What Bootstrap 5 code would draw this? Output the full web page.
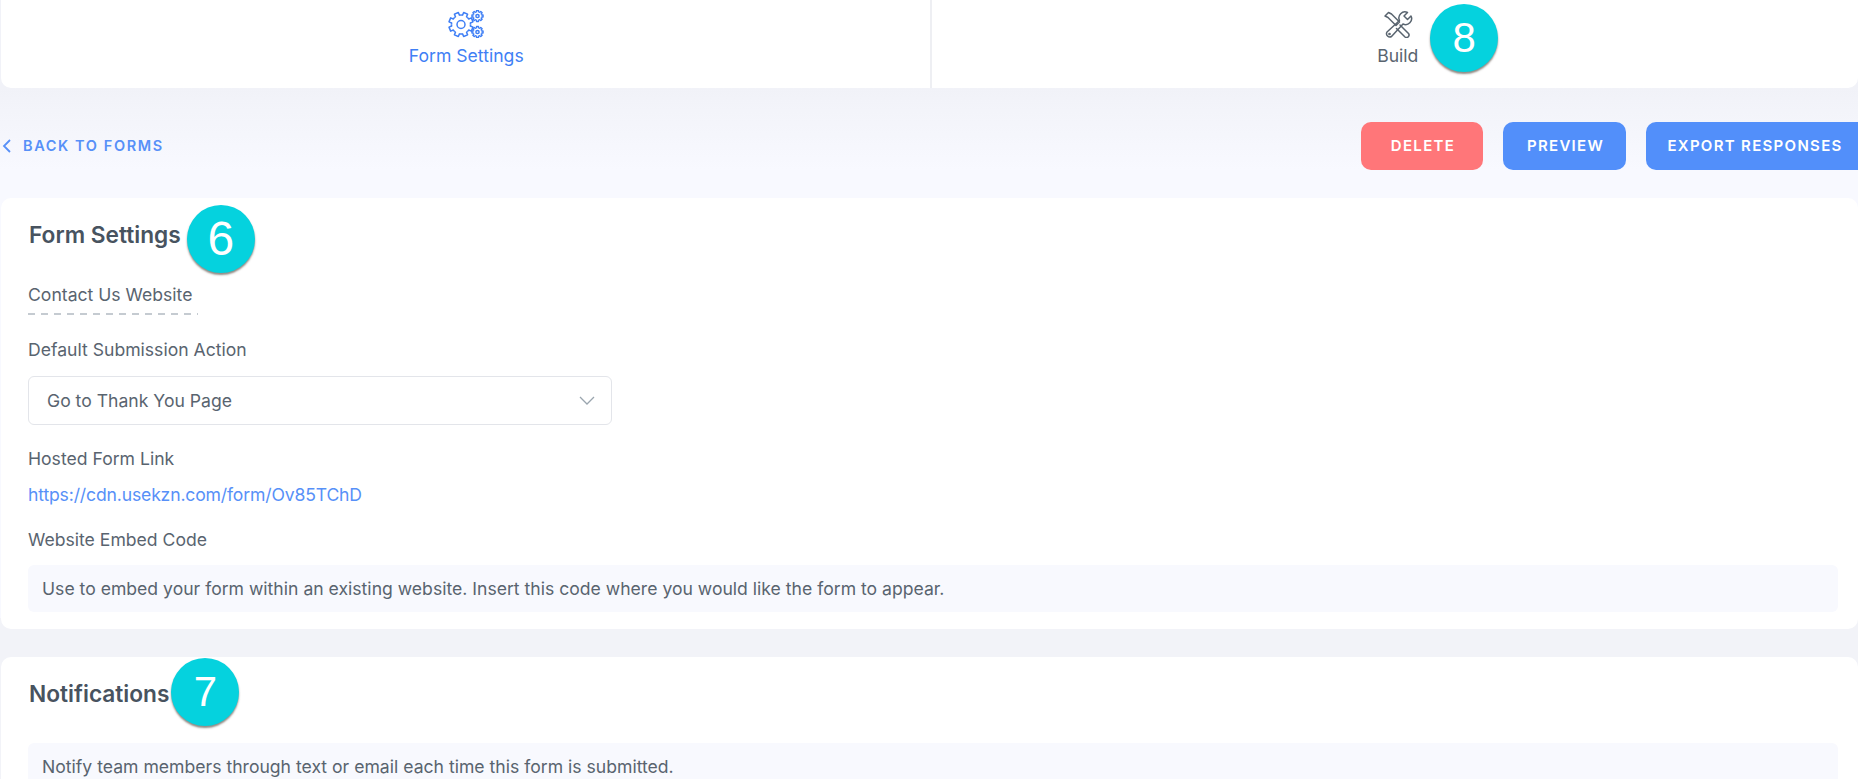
<!DOCTYPE html>
<html lang="en"><head><meta charset="utf-8"><title>Form Settings</title>
<link href="https://cdn.jsdelivr.net/npm/bootstrap@5.3.0/dist/css/bootstrap.min.css" rel="stylesheet">
<style>
html,body{height:779px;overflow:hidden}
body{font-family:Inter,"Liberation Sans",sans-serif;color:#59646f;background:#f8f9ff;font-size:17.6px;line-height:24px}
.page-bg{height:779px;overflow:hidden;background:linear-gradient(#f1f2f8 88px,#f8f9ff 170px)}
.top-tabs{height:88px;background:#fff;border-radius:0 0 10px 10px;margin-left:1px}
.top-tab{height:88px;padding-top:10px}
.top-tab:first-child{padding-left:2px}
.top-tab+.top-tab{border-left:2px solid #eeeff3;padding-left:6px}
.tab-on{color:#3f7ff5}
.tab-label{line-height:24px;margin-top:6px}
.action-bar{height:110px;padding-top:34px}
.back-link{color:#5790f8;font-size:14.5px;font-weight:600;letter-spacing:1.6px;text-decoration:none;height:48px;margin-left:2px}
.act-btn{height:48px;border:0;border-radius:10px;color:#fff;font-size:15px;font-weight:600;letter-spacing:1.3px;line-height:48px;padding:0 0 0 2px}
.act-del{width:122px;background:#ff7679}.act-del:hover{background:#ff7679;color:#fff}
.act-prev{width:123px;background:#528ffa}.act-prev:hover{background:#528ffa;color:#fff}
.act-exp{width:212px;background:#528ffa;border-radius:10px 0 0 10px;padding-left:6px}.act-exp:hover{background:#528ffa;color:#fff}
.act-row{gap:20px}
.panel-stack{background:linear-gradient(transparent 420px,#f2f3f8 420px)}
.panel{background:#fff;border-radius:10px;margin-left:1px;padding:0 20px 0 27px}
.panel-a{height:431px;margin-bottom:28px;padding-top:21px}
.panel-b{height:200px;padding-top:21px}
.panel-title{font-size:22.7px;font-weight:600;line-height:32px;color:#48535f;position:relative;display:inline-block;margin-left:1px}
.num-dot{position:absolute;width:68px;height:68px;border-radius:50%;background:#05d2de;color:#fff;font-family:"Liberation Sans",sans-serif;font-size:42px;font-weight:400;line-height:68px;text-align:center;box-shadow:0 2px 2px rgba(70,60,50,.6)}
.num-big{font-size:48px}
.dot-8{left:53px;top:-40px}
.dot-6{left:100%;margin-left:6px;top:-14px}
.dot-7{left:100%;margin-left:2px;top:-20px}
.title-name{display:block;width:fit-content;line-height:24px;padding:0 6px 8px 0;margin-top:32px;background:repeating-linear-gradient(90deg,#c5cbd1 0 7px,transparent 7px 13px) bottom left/100% 2px no-repeat}
.field-label{line-height:24px;margin:0}
.lab-1{margin-top:23px}
.lab-2{margin-top:22px}
.lab-3{margin-top:21px}
.select-box{width:584px;height:49px;border:1px solid #e3e5ea;border-radius:6px;padding:0 16px 0 18px;background:#fff;margin-top:14px}
.url-link{color:#5790f8;text-decoration:none;margin-top:12px;letter-spacing:-.16px}
.hint-box{background:#f8f9fe;border-radius:6px;height:47px;line-height:47px;padding:0 14px}
.hint-1{margin-top:13px}
.hint-2{margin-top:33px}
</style></head><body>
<div class="page-bg">
<div class="top-tabs d-flex">
 <div class="top-tab flex-fill text-center tab-on w-50">
  <svg width="36" height="28" viewBox="0 0 36 28" fill="none" stroke="#3f7ff5" stroke-width="1.5" stroke-linejoin="round" class="d-block mx-auto">
   <defs><g id="tooth"><path d="M-3.64-8.78L-2.14-9.26V-12.1H2.14V-9.26L3.64-8.78"/></g>
   <g id="gear"><use href="#tooth"/><use href="#tooth" transform="rotate(45)"/><use href="#tooth" transform="rotate(90)"/><use href="#tooth" transform="rotate(135)"/><use href="#tooth" transform="rotate(180)"/><use href="#tooth" transform="rotate(225)"/><use href="#tooth" transform="rotate(270)"/><use href="#tooth" transform="rotate(315)"/></g></defs>
   <use href="#gear" transform="translate(13 14.500) rotate(22.500)"/><circle cx="13" cy="14.500" r="4"/>
   <use href="#gear" transform="translate(29.500 6) scale(.46)" stroke-width="3"/><circle cx="29.500" cy="6" r="1.600"/>
   <use href="#gear" transform="translate(29.500 22) scale(.46)" stroke-width="3"/><circle cx="29.500" cy="22" r="1.600"/>
  </svg>
  <div class="tab-label">Form Settings</div>
 </div>
 <div class="top-tab flex-fill text-center w-50">
  <svg width="30" height="28" viewBox="0 0 30 28" fill="none" stroke="#59646f" stroke-width="1.500" stroke-linejoin="round" stroke-linecap="round" class="d-block mx-auto"><path d="M2 6l3.500-3.500 3 1.500 8 8-3.500 3.500-8-8z"/><path d="M17 15l8.500 8.500a2.500 2.500 0 0 1-3.500 3.500l-8.500-8.500"/><path d="M28 6l-3.500 3.500-3.500-3.500L24.500 2.500a6 6 0 0 0-8 8L4 22a3.300 3.300 0 0 0 4.500 4.500L20 14a6 6 0 0 0 8-8z"/><circle cx="6.500" cy="24" r=".6"/></svg>
  <div class="tab-label position-relative d-inline-block">Build<span class="num-dot dot-8">8</span></div>
 </div>
</div>
<div class="action-bar d-flex justify-content-between">
 <a href="#" class="back-link d-flex align-items-center gap-2">
  <svg width="9" height="14" viewBox="0 0 9 14" fill="none" stroke="#5790f8" stroke-width="1.800"><path d="M8 1L2 7l6 6"/></svg><span class="ms-1">BACK TO FORMS</span></a>
 <div class="d-flex act-row">
  <button class="btn act-btn act-del">DELETE</button>
  <button class="btn act-btn act-prev">PREVIEW</button>
  <button class="btn act-btn act-exp">EXPORT RESPONSES</button>
 </div>
</div>
<div class="panel-stack">
<section class="panel panel-a">
 <div class="panel-title">Form Settings<span class="num-dot num-big dot-6">6</span></div>
 <div class="title-name">Contact Us Website</div>
 <p class="field-label lab-1">Default Submission Action</p>
 <div class="select-box d-flex align-items-center justify-content-between">
  <span>Go to Thank You Page</span>
  <svg width="16" height="9" viewBox="0 0 16 9" fill="none" stroke="#9aa5ae" stroke-width="1.300"><path d="M1 1l7 7 7-7"/></svg>
 </div>
 <p class="field-label lab-2">Hosted Form Link</p>
 <a href="#" class="url-link d-block">https://cdn.usekzn.com/form/Ov85TChD</a>
 <p class="field-label lab-3">Website Embed Code</p>
 <div class="hint-box hint-1">Use to embed your form within an existing website. Insert this code where you would like the form to appear.</div>
</section>
<section class="panel panel-b">
 <div class="panel-title">Notifications<span class="num-dot dot-7">7</span></div>
 <div class="hint-box hint-2">Notify team members through text or email each time this form is submitted.</div>
</section>
</div>
</div>
</body></html>
